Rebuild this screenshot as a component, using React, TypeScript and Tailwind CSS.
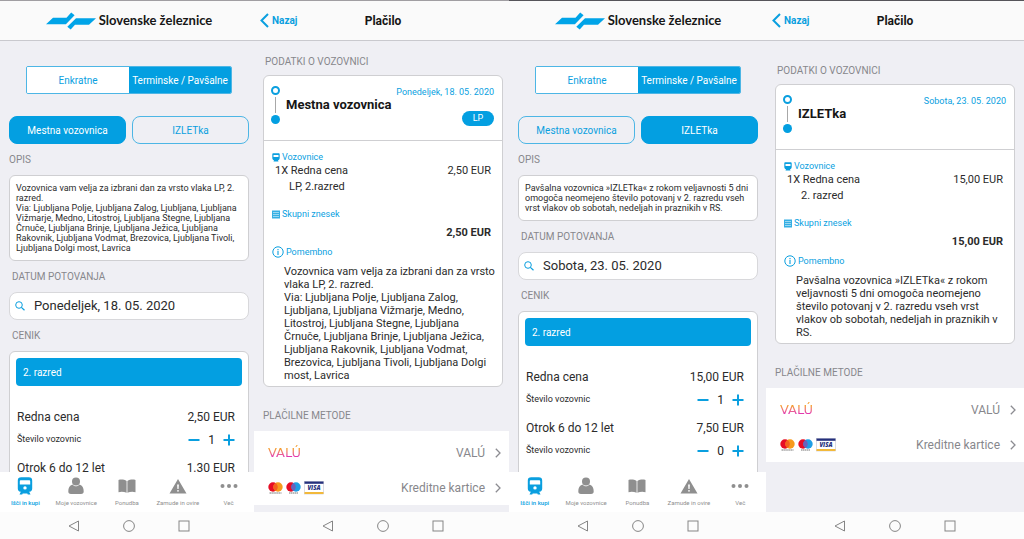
import { useState } from "react";
import type { ReactNode } from "react";
import clsx from "clsx";

type Fare = { name: string; price: string; count: number };

type Ticket = {
  title: string;
  date: string;
  description: string[];
  fares: Fare[];
  lineItem: string;
  total: string;
  badge?: string;
};

const cityTicket: Ticket = {
  title: "Mestna vozovnica",
  date: "Ponedeljek, 18. 05. 2020",
  description: [
    "Vozovnica vam velja za izbrani dan za vrsto vlaka LP, 2. razred.",
    "Via: Ljubljana Polje, Ljubljana Zalog, Ljubljana, Ljubljana Vižmarje, Medno, Litostroj, Ljubljana Stegne, Ljubljana Črnuče, Ljubljana Brinje, Ljubljana Ježica, Ljubljana Rakovnik, Ljubljana Vodmat, Brezovica, Ljubljana Tivoli, Ljubljana Dolgi most, Lavrica",
  ],
  fares: [
    { name: "Redna cena", price: "2,50 EUR", count: 1 },
    { name: "Otrok 6 do 12 let", price: "1.30 EUR", count: 0 },
  ],
  lineItem: "LP, 2.razred",
  total: "2,50 EUR",
  badge: "LP",
};

const tripTicket: Ticket = {
  title: "IZLETka",
  date: "Sobota, 23. 05. 2020",
  description: [
    "Pavšalna vozovnica »IZLETka« z rokom veljavnosti 5 dni omogoča neomejeno število potovanj v 2. razredu vseh vrst vlakov ob sobotah, nedeljah in praznikih v RS.",
  ],
  fares: [
    { name: "Redna cena", price: "15,00 EUR", count: 1 },
    { name: "Otrok 6 do 12 let", price: "7,50 EUR", count: 0 },
  ],
  lineItem: "2. razred",
  total: "15,00 EUR",
};

function TrainIcon() {
  return (
    <svg viewBox="0 0 16 18" className="h-[18px] w-4" fill="currentColor">
      <path
        fillRule="evenodd"
        d="M4.200.3h7.600C14 .3 15.200 1.400 15.200 3.500v8c0 2-1 3.200-2.700 3.200H3.500C1.800 14.700.8 13.500.8 11.500v-8C.8 1.400 2 .3 4.200.3ZM4 3.200c-.8 0-1.200.4-1.200 1.100v3.200h10.400V4.300c0-.7-.4-1.100-1.200-1.100H4Zm4 6a1.700 1.700 0 1 0 0 3.400 1.700 1.700 0 0 0 0-3.400Z"
      />
      <path d="M4.200 14h7.600l1.700 3.500h-2.700l-.5-1H5.700l-.5 1H2.500L4.200 14Z" />
    </svg>
  );
}

function PersonIcon() {
  return (
    <svg viewBox="0 0 16 18" className="h-[18px] w-4" fill="currentColor">
      <circle cx="8" cy="4.500" r="4" />
      <path d="M4.500 7.500C1.500 8.500.3 11 .3 14.200c0 1.800.8 2.800 2.700 2.800h10c1.900 0 2.700-1 2.700-2.800 0-3.200-1.200-5.700-4.200-6.700C10.600 8.700 9.400 9.300 8 9.300S5.400 8.700 4.500 7.500Z" />
    </svg>
  );
}

function BookIcon() {
  return (
    <svg viewBox="0 0 18 18" className="size-[18px]" fill="currentColor">
      <path d="M.5 3C3 2.200 6.200 2.500 8.600 4v11.800C6.200 14.600 3 14.300.5 15.200V3ZM17.500 3c-2.500-.8-5.700-.5-8.100 1v11.800c2.400-1.200 5.600-1.500 8.100-.6V3Z" />
    </svg>
  );
}

function WarningIcon() {
  return (
    <svg viewBox="0 0 18 18" className="size-[18px]" fill="currentColor">
      <path
        fillRule="evenodd"
        d="M9 2l8.500 14.500H.5L9 2Zm-.9 5.500.3 4.500h1.200l.3-4.500H8.100ZM9 12.900a.9.900 0 1 0 0 1.800.9.900 0 0 0 0-1.800Z"
      />
    </svg>
  );
}

function MoreIcon() {
  return (
    <svg viewBox="0 0 18 18" className="size-[18px]" fill="currentColor">
      <circle cx="2.500" cy="9" r="2" />
      <circle cx="9" cy="9" r="2" />
      <circle cx="15.500" cy="9" r="2" />
    </svg>
  );
}

function SearchIcon() {
  return (
    <svg viewBox="0 0 10 10" className="size-[10px] shrink-0" fill="none" stroke="#0a9fdf">
      <circle cx="4" cy="4" r="3.300" />
      <path d="M6.400 6.400 9.500 9.300" strokeWidth="1.200" />
    </svg>
  );
}

function SmallTrainIcon() {
  return (
    <svg viewBox="0 0 8 9" className="h-[9px] w-2" fill="#0a9fdf">
      <path
        fillRule="evenodd"
        d="M1.500.3h5c.8 0 1.200.4 1.200 1.200V5c0 1.200-.7 2-1.700 2.300L6.500 8.500h-5L2 7.300C1 7 .3 6.200.3 5V1.500C.3.700.7.300 1.500.3ZM1.500 2v2h5V2h-5Z"
      />
    </svg>
  );
}

function ReceiptIcon() {
  return (
    <svg viewBox="0 0 8 9" className="h-[9px] w-2">
      <path d="M0 .5h8v8H0z" fill="#35afe4" />
      <path d="M1 2.500h6M1 4.500h6M1 6.500h6" stroke="#fff" strokeWidth=".5" />
    </svg>
  );
}

function InfoIcon() {
  return (
    <svg viewBox="0 0 12 12" className="size-3" fill="none" stroke="#0a9fdf">
      <circle cx="6" cy="6" r="5.200" />
      <path d="M6 5v4M6 3v1.200" strokeWidth="1.100" />
    </svg>
  );
}

function ChevronRight() {
  return (
    <svg viewBox="0 0 6 10" className="h-[10px] w-[6px]" fill="none" stroke="#8c8c91" strokeWidth="1.300">
      <path d="M.8.8 5 5 .8 9.200" />
    </svg>
  );
}

function RailwayLogo() {
  return (
    <div className="flex items-center gap-[3px]">
      <svg viewBox="0 0 50 18" className="h-[18px] w-[50px]" fill="#00a4e8">
        <path d="M0 12.300 7 5.800h13.500L25.200.5l3.400 2.700-8.700 9.100H0Z" />
        <path d="M50 6.300l-7 6.500H29l-4.300 4.700-3.400-2.800L30 6.300h20Z" />
      </svg>
      <span className="font-[Lato] text-[13px] font-bold whitespace-nowrap text-[#161616]">
        Slovenske železnice
      </span>
    </div>
  );
}

function ValuLogo() {
  return (
    <span className="bg-linear-to-b from-[#f59a23] from-25% to-[#e22bb4] to-75% bg-clip-text font-['DejaVu_Sans'] text-[13px] leading-4 text-transparent">
      VALÚ
    </span>
  );
}

function CardLogos() {
  return (
    <svg viewBox="0 0 58 14" className="h-[14px] w-[58px]" role="img" aria-label="Mastercard, Maestro, Visa">
      <circle cx="5" cy="6" r="4.700" fill="#e60d25" />
      <circle cx="10" cy="6" r="4.700" fill="#f79a1c" />
      <path d="M7.500 2a4.700 4.700 0 0 1 0 8 4.700 4.700 0 0 1 0-8Z" fill="#f4601f" />
      <path d="M1.500 12h12" stroke="#777" strokeDasharray="1.500 .4" />
      <circle cx="23" cy="6" r="4.700" fill="#e60d25" />
      <circle cx="28" cy="6" r="4.700" fill="#1f9ee5" />
      <path d="M25.500 2a4.700 4.700 0 0 1 0 8 4.700 4.700 0 0 1 0-8Z" fill="#6a62bb" />
      <path d="M21 12h9" stroke="#777" strokeDasharray="1.500 .4" />
      <rect x="36.500" y=".5" width="19" height="12.500" fill="#fff" stroke="#c5c5d2" strokeWidth=".6" />
      <path d="M36.500.5h19v2.300h-19z" fill="#25307c" />
      <path d="M36.500 11h19v2h-19z" fill="#f2b93b" />
      <text
        x="46"
        y="9.200"
        textAnchor="middle"
        fontFamily="Open Sans"
        fontSize="6"
        fontWeight="800"
        fontStyle="italic"
        fill="#25307c"
      >
        VISA
      </text>
    </svg>
  );
}

function SystemNav({ gutter }: { gutter: string }) {
  return (
    <nav className={clsx("flex h-[27px] shrink-0 items-center justify-center gap-[43px] bg-[#fcfcfc] text-[#858585]", gutter)}>
      <button type="button" aria-label="Nazaj">
        <svg viewBox="0 0 12 12" className="size-3" fill="none" stroke="currentColor">
          <path d="M10.500 1v10L1 6l9.500-5Z" strokeLinejoin="round" />
        </svg>
      </button>
      <button type="button" aria-label="Domov">
        <svg viewBox="0 0 12 12" className="size-3" fill="none" stroke="currentColor">
          <circle cx="6" cy="6" r="5.400" />
        </svg>
      </button>
      <button type="button" aria-label="Zadnje aplikacije">
        <svg viewBox="0 0 12 12" className="size-3" fill="none" stroke="currentColor">
          <rect x="1" y="1" width="10" height="10" />
        </svg>
      </button>
    </nav>
  );
}

const tabs = [
  { label: "Išči in kupi", icon: <TrainIcon /> },
  { label: "Moje vozovnice", icon: <PersonIcon /> },
  { label: "Ponudba", icon: <BookIcon /> },
  { label: "Zamude in ovire", icon: <WarningIcon /> },
  { label: "Več", icon: <MoreIcon /> },
];

function TabBar() {
  return (
    <nav className="grid h-10 shrink-0 grid-cols-5 bg-white">
      {tabs.map((tab, index) => (
        <a
          key={tab.label}
          href="#"
          className={clsx(
            "flex flex-col items-center gap-[2px] pt-[5px] text-[6px] leading-3 whitespace-nowrap",
            index === 0 ? "font-medium text-[#0a9fdf]" : "text-[#8f8f8f]"
          )}
        >
          {tab.icon}
          {tab.label}
        </a>
      ))}
    </nav>
  );
}

type ScreenProps = { dark?: boolean; gutter: string; header: ReactNode; tabBar?: boolean; children: ReactNode };

function Screen({ dark, gutter, header, tabBar, children }: ScreenProps) {
  return (
    <section className="flex h-full min-w-0 flex-col overflow-hidden">
      <header
        className={clsx(
          "relative flex h-[41px] shrink-0 items-center justify-center border-t border-b border-b-[#c9c9ce] bg-[#fafafa]",
          dark ? "border-t-[#56545a]" : "border-t-[#a09ea2]",
          gutter
        )}
      >
        {header}
      </header>
      <div className="min-h-0 flex-1 overflow-y-auto [scrollbar-width:none]">{children}</div>
      {tabBar && <TabBar />}
      <SystemNav gutter={gutter} />
    </section>
  );
}

function FareRow({ fare }: { fare: Fare }) {
  const [count, setCount] = useState(fare.count);

  return (
    <div className="flex flex-col gap-[3px] pr-[7px] pl-px">
      <div className="flex h-5 items-center justify-between text-xs">
        <span>{fare.name}</span>
        <span>{fare.price}</span>
      </div>
      <div className="flex h-5 items-center justify-between">
        <span className="text-[9px]">Število vozovnic</span>
        <div className="flex items-center text-[#0a9fdf]">
          <button type="button" aria-label="Manj" onClick={() => setCount(Math.max(0, count - 1))}>
            <svg viewBox="0 0 12 12" className="size-3" stroke="currentColor" strokeWidth="2">
              <path d="M.5 6h11" />
            </svg>
          </button>
          <span className="w-[23px] text-center text-xs text-[#222]">{count}</span>
          <button type="button" aria-label="Več" onClick={() => setCount(count + 1)}>
            <svg viewBox="0 0 12 12" className="size-3" stroke="currentColor" strokeWidth="2">
              <path d="M.5 6h11M6 .5v11" />
            </svg>
          </button>
        </div>
      </div>
    </div>
  );
}

function SearchScreen({ ticket, dark, gutter }: { ticket: Ticket; dark?: boolean; gutter: string }) {
  const inputId = `date-${ticket.title.replace(" ", "-")}`;

  return (
    <Screen dark={dark} gutter={gutter} header={<RailwayLogo />} tabBar>
      <div className={gutter}>
        <div className="mx-[17px] mt-[25px] grid h-7 grid-cols-2 overflow-hidden rounded-xs border border-[#4db6e5] text-[10px]">
          <button type="button" className="bg-white text-[#0a9fdf]">
            Enkratne
          </button>
          <button type="button" className="bg-[#039fe1] whitespace-nowrap text-white">
            Terminske / Pavšalne
          </button>
        </div>

        <div className="mt-[22px] grid grid-cols-2 gap-[6px]">
          {[cityTicket.title, tripTicket.title].map((title) => (
            <button
              key={title}
              type="button"
              className={clsx(
                "h-7 rounded-lg border text-[10px]",
                title === ticket.title
                  ? "border-[#039fe1] bg-[#039fe1] text-white"
                  : "border-[#4db6e5] text-[#0a9fdf]"
              )}
            >
              {title}
            </button>
          ))}
        </div>

        <h2 className="flex h-[31px] items-center text-[10px] text-[#87878c]">OPIS</h2>
        <div className="rounded-md border border-[#cfcfd2] bg-white px-[6px] py-[7px] text-[9px] leading-[10px]">
          {ticket.description.map((text) => (
            <p key={text}>{text}</p>
          ))}
        </div>

        <label htmlFor={inputId} className="flex h-[31px] items-center pl-[3px] text-[10px] text-[#87878c]">
          DATUM POTOVANJA
        </label>
        <div className="flex h-7 items-center gap-[9px] rounded-lg border border-[#d8d8db] bg-white pl-[5px]">
          <SearchIcon />
          <input id={inputId} type="text" defaultValue={ticket.date} className="min-w-0 flex-1 text-[13px] outline-none" />
        </div>

        <h2 className="flex h-[31px] items-center pl-[3px] text-[10px] text-[#87878c]">CENIK</h2>
        <div className="rounded-t-md border border-[#cfcfd2] bg-white p-[6px] pb-8">
          <h3 className="mb-[21px] flex h-7 items-center rounded-sm bg-[#039fe1] px-[7px] text-[10px] text-white">
            2. razred
          </h3>
          <div className="flex flex-col gap-2">
            {ticket.fares.map((fare) => (
              <FareRow key={fare.name} fare={fare} />
            ))}
          </div>
        </div>
      </div>
    </Screen>
  );
}

function CardHeading({ icon, children }: { icon: ReactNode; children: ReactNode }) {
  return (
    <h3 className="flex items-center gap-[2px] text-[9px] leading-3 text-[#0a9fdf]">
      {icon}
      {children}
    </h3>
  );
}

function PaymentScreen({ ticket, dark, gutter, className }: { ticket: Ticket; dark?: boolean; gutter: string; className?: string }) {
  return (
    <Screen
      dark={dark}
      gutter={gutter}
      header={
        <>
          <button type="button" className="absolute left-[6px] flex items-center gap-[3px] text-[10px] font-bold text-[#0a9fdf]">
            <svg viewBox="0 0 9 15" className="h-[15px] w-[9px]" fill="none" stroke="currentColor" strokeWidth="2">
              <path d="M8 1 1.500 7.500 8 14" />
            </svg>
            Nazaj
          </button>
          <h1 className="text-xs font-bold text-[#161616]">Plačilo</h1>
        </>
      }
    >
      <div className={clsx(gutter, className)}>
        <h2 className="flex h-[34px] items-end pb-[7px] pl-[2px] text-[10px] leading-3 text-[#87878c]">
          PODATKI O VOZOVNICI
        </h2>
        <div className="rounded-md border border-[#cfcfd2] bg-white">
          <div className="flex h-[65px] items-start justify-between border-b border-[#cfcfd2] pt-[10px] pr-2 pl-[7px]">
            <div className="flex items-center gap-[6px]">
              <div className="flex flex-col items-center gap-[2px]">
                <span className="size-[9px] rounded-full border-2 border-[#0a9fdf]" />
                <span className="h-4 w-px bg-[#a8a8a8]" />
                <span className="size-[9px] rounded-full bg-[#039fe1]" />
              </div>
              <span className="text-[13px] font-bold text-[#161616]">{ticket.title}</span>
            </div>
            <div className="flex flex-col items-end gap-[13px]">
              <span className="text-[9px] leading-3 text-[#0a9fdf]">{ticket.date}</span>
              {ticket.badge && (
                <span className="flex h-[15px] w-8 items-center justify-center rounded-full bg-[#039fe1] text-[9px] text-white">
                  {ticket.badge}
                </span>
              )}
            </div>
          </div>

          <div className="pt-[10px] pr-[5px] pb-1 pl-2 text-[11px] leading-4">
            <CardHeading icon={<SmallTrainIcon />}>Vozovnice</CardHeading>
            <div className="flex justify-between pr-[6px] pl-[3px]">
              <span>1X Redna cena</span>
              <span>{ticket.total}</span>
            </div>
            <p className="mb-[13px] pl-[17px]">{ticket.lineItem}</p>
            <CardHeading icon={<ReceiptIcon />}>Skupni znesek</CardHeading>
            <p className="my-[5px] pr-[6px] text-right font-bold">{ticket.total}</p>
            <CardHeading icon={<InfoIcon />}>Pomembno</CardHeading>
            <div className="mt-[7px] pl-3 leading-[13px]">
              {ticket.description.map((text) => (
                <p key={text}>{text}</p>
              ))}
            </div>
          </div>
        </div>
        <h2 className="flex h-11 items-end pb-[9px] text-[10px] leading-3 text-[#87878c]">PLAČILNE METODE</h2>
      </div>

      <ul className="bg-white pt-1 text-xs text-[#87878c]">
        <li>
          <a href="#" className="flex h-[35px] items-center pr-2 pl-[14px]">
            <ValuLogo />
            <span className="mr-[10px] ml-auto">VALÚ</span>
            <ChevronRight />
          </a>
        </li>
        <li>
          <a href="#" className="flex h-[35px] items-center pr-2 pl-[14px]">
            <CardLogos />
            <span className="mr-[10px] ml-auto">Kreditne kartice</span>
            <ChevronRight />
          </a>
        </li>
      </ul>
    </Screen>
  );
}

export default function App() {
  return (
    <main className="grid h-screen grid-cols-[254fr_255fr_257fr_258fr] bg-[#efeff4] font-[Roboto,sans-serif] text-[#2b2b2b]">
      <SearchScreen ticket={cityTicket} gutter="pl-[9px] pr-[5px]" />
      <PaymentScreen ticket={cityTicket} gutter="pl-[9px] pr-[6px]" />
      <SearchScreen ticket={tripTicket} gutter="pl-[9px] pr-2" dark />
      <PaymentScreen ticket={tripTicket} gutter="px-[9px]" className="pt-[9px]" dark />
    </main>
  );
}
